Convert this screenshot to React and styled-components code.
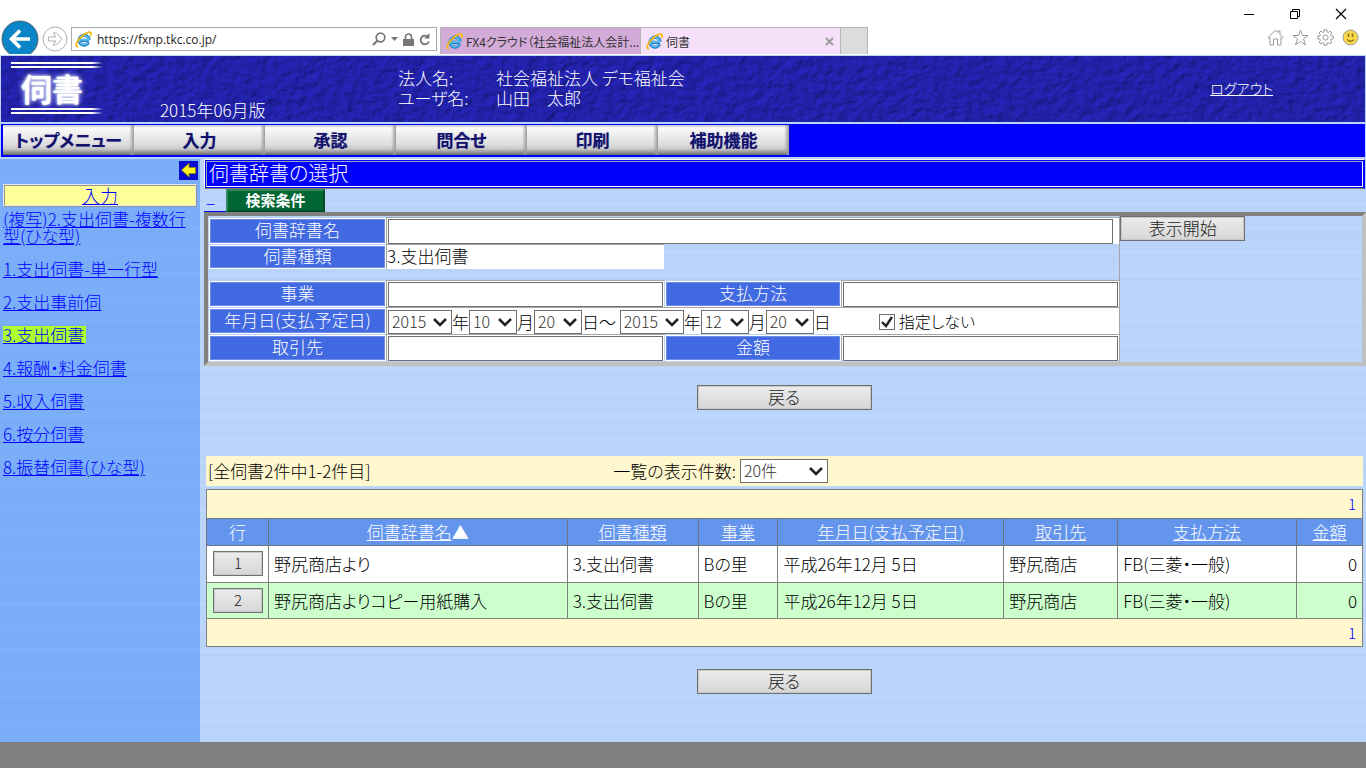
import React, { useState } from 'react';
import styled, { createGlobalStyle, css } from 'styled-components';

const GlobalStyle = createGlobalStyle`
  * {
    box-sizing: border-box;
  }

  body {
    margin: 0;
    font-family: 'Noto Sans CJK JP', sans-serif;
    font-size: 17px;
    font-weight: 300;
    line-height: 17px;
    font-feature-settings: 'palt';
    color: #000;
  }

  button, input, select {
    font: inherit;
    font-feature-settings: inherit;
    color: inherit;
    margin: 0;
  }
`;

const streaks = (a, b, c) => css`
  background: repeating-linear-gradient(
    ${a} 0 9px, ${b} 9px 11px, ${a} 11px 20px, ${c} 20px 24px, ${b} 24px 31px, ${a} 31px 44px, ${c} 44px 47px
  );
`;

const Page = styled.div`
  min-height: 100vh;
  display: flex;
  flex-direction: column;
  background: #bad4f9;
`;

/* browser chrome */

const Chrome = styled.header`
  height: 55px;
  background: #fff;
  overflow: hidden;
  border-bottom: 1px solid #fff;
  margin-bottom: 1px;
`;

const WindowControls = styled.div`
  height: 27px;
  display: flex;
  justify-content: flex-end;
  align-items: center;
  gap: 28px;
  padding-right: 16px;
`;

const IconButton = styled.button`
  display: flex;
  padding: 0;
  border: 0;
  background: none;
`;

const ToolBar = styled.div`
  height: 27px;
  display: flex;
  align-items: flex-start;
`;

const BackButton = styled(IconButton)`
  margin: -7px 3px 0 1px;
`;

const ForwardButton = styled(IconButton)`
  margin: -1px 3px 0 0;
`;

const AddressBar = styled.div`
  width: 366px;
  height: 24px;
  display: flex;
  align-items: center;
  gap: 5px;
  padding: 0 5px 0 3px;
  border: 1px solid #a9a9a9;
`;

const AddressInput = styled.input`
  flex: 1;
  min-width: 0;
  border: 0;
  padding: 0;
  outline: 0;
  font-family: 'Open Sans', sans-serif;
  font-size: 12px;
  font-weight: 400;
  color: #222;
`;

const Tabs = styled.div`
  display: flex;
  height: 27px;
  margin-left: 3px;
  border: 1px solid #b4b4b4;
  border-bottom: 0;
`;

const Tab = styled.div`
  width: 200px;
  display: flex;
  align-items: center;
  gap: 3px;
  padding: 0 ${(p) => (p.$active ? 6 : 0)}px 0 5px;
  background: ${(p) => (p.$active ? '#f6dff9' : '#d3abd9')};
  border-right: 1px solid #b4b4b4;
  font-size: 12px;
  font-weight: 400;
  color: #333;
  white-space: nowrap;
`;

const TabTitle = styled.span`
  flex: 1;
`;

const NewTab = styled.button`
  width: 26px;
  border: 0;
  background: #dcdcdc;
`;

const ToolIcons = styled.div`
  margin-left: auto;
  display: flex;
  align-items: center;
  gap: 8px;
  padding: 2px 7px 0 0;
`;

/* application banner */

const Banner = styled.div`
  position: relative;
  height: 66px;
  margin: 0 1px 2px;
  display: grid;
  grid-template-columns: 158px 238px 1fr auto;
  background: #1e1ea6;
  color: #fff;
`;

const Texture = styled.svg`
  position: absolute;
  inset: 0;
  width: 100%;
  height: 100%;
  opacity: 0.5;
`;

const Logo = styled.div`
  position: relative;
  padding: 6px 0 8px 10px;
  display: flex;
  flex-direction: column;
  justify-content: space-between;
`;

const LogoRule = styled.div`
  width: 92px;
  height: 6px;
  background:
    linear-gradient(90deg, #fff 88%, transparent) 0 0 / 100% 2px no-repeat,
    linear-gradient(90deg, #fff 88%, transparent) 0 4px / 100% 2px no-repeat;
`;

const LogoText = styled.div`
  padding-left: 10px;
  font-size: 31px;
  line-height: 34px;
  font-weight: 700;
  text-shadow: 0 0 3px #fff, 0 0 6px #c4ccff;
`;

const Version = styled.div`
  position: relative;
  align-self: end;
  padding: 0 0 4px 1px;
`;

const UserInfo = styled.dl`
  position: relative;
  margin: 0;
  padding: 13px 0 0 1px;
  display: grid;
  grid-template-columns: 98px 1fr;
  align-content: start;
  row-gap: 2px;
  white-space: pre;

  dt, dd {
    margin: 0;
    line-height: 18px;
  }
`;

const Logout = styled.a`
  position: relative;
  align-self: center;
  margin-right: 92px;
  padding-bottom: 2px;
  color: #fff;
  font-size: 14px;
`;

const NavBar = styled.nav`
  height: 33px;
  margin: 0 1px 2px;
  padding: 1px 2px 2px;
  display: flex;
  background: #00f;
`;

const NavButton = styled.button`
  width: 131px;
  padding: 0 0 2px;
  border: 0;
  background:
    linear-gradient(90deg, transparent, #9a9a9a) right / 5px 100% no-repeat,
    linear-gradient(#c4c4c4 0, #fafafa 3px, #efefef 9px, #dcdcdc 20px, #c8c8c8 24px, #8a8a8a 28px, #6a6a6a);
  color: #12126c;
  font-weight: 700;
  text-shadow: 0 0 1px #7777b0;
`;

/* body */

const Body = styled.div`
  flex: 1;
  display: flex;
`;

const SideBar = styled.aside`
  width: 200px;
  flex: none;
  padding: 2px 3px 0;
  ${streaks('#7aaef9', '#78acf7', '#7db0fa')}
`;

const CollapseButton = styled(IconButton)`
  margin: 0 -1px 4px auto;
`;

const SideTitle = styled.div`
  height: 23px;
  border: 2px ridge #e8e8e8;
  background: #ffff99;
  text-align: center;
  font-size: 18px;
  line-height: 18px;

  a {
    color: #00f;
  }
`;

const SideList = styled.ul`
  list-style: none;
  margin: 3px 0 0;
  padding: 0;
`;

const SideItem = styled.li`
  margin-bottom: 16px;
  line-height: 17px;

  a {
    color: #00f;
  }
`;

const CurrentLink = styled.a`
  display: inline-block;
  padding-right: 2px;
  background: #adff2f;
`;

const Main = styled.main`
  flex: 1;
  min-width: 0;
  padding: 0 0 20px 4px;
  ${streaks('#bad4f9', '#b8d3f8', '#bdd7fc')}
`;

const TitleFrame = styled.div`
  margin-right: 1px;
  padding: 1px;
  border: 1px solid #fff;
  border-right-color: #00f;
  border-bottom-color: #808080;
  background: #00f;
`;

const Title = styled.h1`
  margin: 0;
  height: 26px;
  padding-left: 2px;
  border: 1px solid #a0a0b8;
  border-right-color: #fff;
  border-bottom-color: #fff;
  color: #fff;
  font-size: 20px;
  line-height: 22px;
  font-weight: 300;
`;

const SearchHead = styled.div`
  height: 23px;
  display: flex;
  align-items: stretch;
`;

const ToggleLink = styled.a`
  width: 22px;
  padding: 6px 0 0 2px;
  color: #00f;
  text-decoration: none;
  border-bottom: 1px solid #00f;
`;

const SearchTab = styled.h2`
  width: 99px;
  margin: 0;
  border: 2px solid #004d26;
  border-top-color: #2f8a5c;
  border-left-color: #2f8a5c;
  background: #006633;
  color: #fff;
  font-size: 15px;
  line-height: 18px;
  font-weight: 700;
  text-align: center;
`;

const SearchPanel = styled.form`
  display: flex;
  border: 4px solid #808080;
  border-right-color: #c0c0c0;
  border-bottom-color: #c0c0c0;
`;

const Fields = styled.div`
  flex: 912;
  padding: 1px 0;
  border-right: 1px solid #a6a6a6;
`;

const FieldRow = styled.div`
  display: grid;
  grid-template-columns: 178fr 278fr 177fr 278fr;
  height: ${(p) => p.$height || 27}px;
  margin-bottom: ${(p) => p.$gap || 0}px;
`;

const FieldLabel = styled.label`
  margin: 2px 1px 1px 2px;
  border: 1px solid #6f8ce6;
  background: #4169e1;
  box-shadow: 0 0 0 1px #fff;
  color: #fff;
  text-align: center;
  line-height: ${(p) => (p.$short ? 18 : 20)}px;
`;

const Field = styled.div`
  grid-column: span ${(p) => p.$span || 1};
  display: flex;
  align-items: center;
  padding: 1px 1px 0;
  border-top: 1px solid #a6a6a6;
  border-left: 1px solid #a6a6a6;
  background: #fff;
`;

const PlainField = styled(Field)`
  padding: 0 0 3px;
`;

const TextInput = styled.input`
  width: ${(p) => (p.$inset ? 'calc(100% - 5px)' : '100%')};
  height: 25px;
  padding: 0 4px;
  border: 1px solid #707070;
  border-radius: 0;
  background: #fff;
`;

const chevron =
  "url(\"data:image/svg+xml,%3Csvg xmlns='http://www.w3.org/2000/svg' width='14' height='10'%3E%3Cpath d='M1 2l6 6 6-6' fill='none' stroke='%23222' stroke-width='2.6'/%3E%3C/svg%3E\")";

const Select = styled.select`
  width: ${(p) => p.$width}px;
  height: 24px;
  flex: none;
  padding: 0 0 1px 3px;
  appearance: none;
  border: 1px solid #707070;
  border-radius: 0;
  background: #fff ${chevron} right 4px center no-repeat;
  color: #333;
  font-size: 16px;
`;

const CheckLabel = styled.label`
  margin-left: 48px;
  display: flex;
  align-items: center;
  gap: 4px;
  font-size: 16px;
`;

const tick =
  "url(\"data:image/svg+xml,%3Csvg xmlns='http://www.w3.org/2000/svg' width='14' height='14'%3E%3Cpath d='M2 7l4 4 6-9' fill='none' stroke='%23222' stroke-width='2.4'/%3E%3C/svg%3E\")";

const CheckBox = styled.input`
  width: 16px;
  height: 16px;
  appearance: none;
  border: 1px solid #707070;
  background: #fff;

  &:checked {
    background-image: ${tick};
  }
`;

const PanelSide = styled.div`
  flex: 242;
`;

const Button = styled.button`
  display: block;
  width: ${(p) => p.$width}px;
  height: 25px;
  padding: 0 0 2px;
  border: 1px solid #707070;
  box-shadow: inset 0 0 0 1px #c8c8c8;
  background: linear-gradient(#ececec, #d6d6d6);
  color: #222;
`;

const RowButton = styled(Button)`
  margin-left: 1px;
  font-size: 15px;
`;

const BackRow = styled.div`
  display: flex;
  justify-content: center;
  margin-right: 2px;
  padding: ${(p) => (p.$last ? '22px 0 0' : '19px 0 46px')};
`;

const ListHead = styled.div`
  display: grid;
  grid-template-columns: 406fr 751fr;
  align-items: center;
  height: 30px;
  margin: 0 3px 3px 2px;
  padding: 0 0 1px 2px;
  background: #fff7ce;
`;

const PageSize = styled.label`
  display: flex;
  align-items: center;
  gap: 4px;
`;

const Table = styled.table`
  width: calc(100% - 5px);
  margin-left: 2px;
  table-layout: fixed;
  border-collapse: collapse;
  border: 1px solid #808080;
`;

const PagerCell = styled.td`
  height: ${(p) => p.$height}px;
  padding: 0 6px 1px;
  background: #fff7ce;
  color: #00f;
  text-align: right;
  font-size: 15px;
`;

const HeadCell = styled.th`
  height: 27px;
  padding: 0 0 2px;
  border: 1px solid #6f7680;
  background: #6495ed;
  color: #fff;
  font-weight: 300;

  a {
    color: #fff;
  }
`;

const Row = styled.tr`
  height: ${(p) => (p.$alt ? 36 : 37)}px;
  background: ${(p) => (p.$alt ? '#ccffcc' : '#fff')};
`;

const Cell = styled.td`
  padding: 0 5px 1px;
  border: 1px solid #808080;
  text-align: ${(p) => p.$align || 'left'};
  white-space: pre;
`;

const Footer = styled.footer`
  height: 26px;
  background: #808080;
`;

const IeIcon = () => (
  <svg width="17" height="17" viewBox="0 0 17 17" fill="none">
    <path d="M14 9.3H5.2M13.6 11.4a5 5 0 1 1 .5-2.6" stroke="#1d7fc4" strokeWidth="3.2" />
    <path d="M13.8 8.9H5.6M13 11.6a4.7 4.7 0 1 1 .8-2.4" stroke="#5cc0ee" strokeWidth="1.6" />
    <path d="M3 15.6C.2 16 .6 12 4.6 7.6 8.6 3 14 .2 15.6 1.5c.9.8.6 2-.1 3.3" stroke="#f2b90c" strokeWidth="1.7" />
  </svg>
);

const menuItems = ['トップメニュー', '入力', '承認', '問合せ', '印刷', '補助機能'];

const currentLink = '3.支出伺書';

const sideLinks = [
  '(複写)2.支出伺書-複数行型(ひな型)',
  '1.支出伺書-単一行型',
  '2.支出事前伺',
  '3.支出伺書',
  '4.報酬・料金伺書',
  '5.収入伺書',
  '6.按分伺書',
  '8.振替伺書(ひな型)',
];

const columns = [
  { label: '行', width: 62, plain: true },
  { label: '伺書辞書名', width: 299, sorted: true },
  { label: '伺書種類', width: 131 },
  { label: '事業', width: 80 },
  { label: '年月日(支払予定日)', width: 226 },
  { label: '取引先', width: 114 },
  { label: '支払方法', width: 179 },
  { label: '金額', width: 66 },
];

const totalWidth = columns.reduce((sum, c) => sum + c.width, 0);

const rows = [
  ['野尻商店より', '3.支出伺書', 'Bの里', '平成26年12月 5日', '野尻商店', 'FB(三菱・一般)'],
  ['野尻商店よりコピー用紙購入', '3.支出伺書', 'Bの里', '平成26年12月 5日', '野尻商店', 'FB(三菱・一般)'],
];

const BrowserChrome = () => (
  <Chrome>
    <WindowControls>
      <IconButton aria-label="最小化">
        <svg width="18" height="18"><path d="M4 9.5h10" stroke="#000" /></svg>
      </IconButton>
      <IconButton aria-label="元に戻す">
        <svg width="18" height="18" fill="none" stroke="#000">
          <path d="M4.5 6.5h7v7h-7zM6.5 6.5v-2h7v7h-2" />
        </svg>
      </IconButton>
      <IconButton aria-label="閉じる">
        <svg width="18" height="18"><path d="M4 4l10 10M14 4L4 14" stroke="#000" strokeWidth="1.2" /></svg>
      </IconButton>
    </WindowControls>
    <ToolBar>
      <BackButton aria-label="戻る">
        <svg width="38" height="38" fill="none">
          <circle cx="19" cy="19" r="18" fill="#0a86c8" stroke="#54646e" />
          <path d="M29 19H11M19 10.5L10.5 19l8.5 8.5" stroke="#fff" strokeWidth="3.6" />
        </svg>
      </BackButton>
      <ForwardButton aria-label="進む">
        <svg width="26" height="26" fill="none" stroke="#b0b0b0">
          <circle cx="13" cy="13" r="12" />
          <path d="M6.5 11h7.5l-3-4h3.5l5.5 6-5.500 6h-3.500l3-4H6.500z" />
        </svg>
      </ForwardButton>
      <AddressBar>
        <IeIcon />
        <AddressInput aria-label="アドレス" defaultValue="https://fxnp.tkc.co.jp/" />
        <svg width="14" height="14" fill="none" stroke="#777">
          <circle cx="8.5" cy="5.5" r="4.3" strokeWidth="1.7" />
          <path d="M5.5 8.5L1 13" strokeWidth="2.2" />
        </svg>
        <svg width="7" height="4"><path d="M0 0h7L3.5 4z" fill="#777" /></svg>
        <svg width="11" height="13" fill="none">
          <path d="M0 6h11v7H0z" fill="#777" />
          <path d="M2.5 6V4a3 3 0 0 1 6 0v2" stroke="#777" strokeWidth="1.7" />
        </svg>
        <svg width="12" height="13" fill="none">
          <path d="M8.5 3.5A4.3 4.3 0 1 0 10 8.5" stroke="#777" strokeWidth="1.9" />
          <path d="M10.5 0v5.5H5z" fill="#777" />
        </svg>
      </AddressBar>
      <Tabs>
        <Tab>
          <IeIcon />
          <TabTitle>FX4クラウド（社会福祉法人会計...</TabTitle>
        </Tab>
        <Tab $active>
          <IeIcon />
          <TabTitle>伺書</TabTitle>
          <IconButton aria-label="タブを閉じる">
            <svg width="9" height="9"><path d="M1 1l7 7M8 1L1 8" stroke="#999" strokeWidth="1.8" /></svg>
          </IconButton>
        </Tab>
        <NewTab aria-label="新しいタブ" />
      </Tabs>
      <ToolIcons>
        <IconButton aria-label="ホーム">
          <svg width="17" height="17" fill="none" stroke="#999">
            <path d="M1 8.5L8.5 1l2.5 2.5V2h2v3.5l3 3-1 1-1-1v7.5h-3.500v-6h-4v6H3V8.500l-1 1z" />
          </svg>
        </IconButton>
        <IconButton aria-label="お気に入り">
          <svg width="17" height="17" fill="none" stroke="#999">
            <path d="M8.5 1l2 5.500h5.500l-4.500 3.500 2 6-5-3.700-5 3.700 2-6L1 6.500h5.500z" />
          </svg>
        </IconButton>
        <IconButton aria-label="ツール">
          <svg width="17" height="17" viewBox="0 0 17 17" fill="none" stroke="#999">
            <path d="M7 .8h3v2l1.600.7L13 2l2 2-1.400 1.500.6 1.500h2v3h-2l-.6 1.500L15 13l-2 2-1.400-1.400-1.600.6v2H7v-2l-1.600-.6L4 15l-2-2 1.400-1.500L2.800 10h-2V7h2l.6-1.500L2 4l2-2 1.400 1.500L7 2.800z" />
            <circle cx="8.5" cy="8.5" r="2.6" />
          </svg>
        </IconButton>
        <IconButton aria-label="フィードバック">
          <svg width="17" height="17" fill="none">
            <circle cx="8.5" cy="8.5" r="7.5" fill="#fbd84b" stroke="#999" />
            <path d="M6.5 4.5v3.5M10.5 4.5v3.5" stroke="#8b701c" strokeWidth="1.6" />
            <path d="M5 10.5q3.5 3.5 7 0" stroke="#8b701c" strokeWidth="1.2" />
          </svg>
        </IconButton>
      </ToolIcons>
    </ToolBar>
  </Chrome>
);

const DateSelect = ({ name, year, month, day }) => (
  <>
    <Select $width={64} aria-label={`${name}の年`}><option>{year}</option></Select>年
    <Select $width={48} aria-label={`${name}の月`}><option>{month}</option></Select>月
    <Select $width={48} aria-label={`${name}の日`}><option>{day}</option></Select>日
  </>
);

const SearchForm = () => {
  const [unspecified, setUnspecified] = useState(true);

  return (
    <SearchPanel onSubmit={(e) => e.preventDefault()}>
      <Fields>
        <FieldRow>
          <FieldLabel htmlFor="dictName">伺書辞書名</FieldLabel>
          <Field $span={3}><TextInput id="dictName" $inset /></Field>
        </FieldRow>
        <FieldRow $height={25} $gap={11}>
          <FieldLabel as="div" $short>伺書種類</FieldLabel>
          <PlainField>3.支出伺書</PlainField>
        </FieldRow>
        <FieldRow>
          <FieldLabel htmlFor="business">事業</FieldLabel>
          <Field><TextInput id="business" /></Field>
          <FieldLabel htmlFor="payment">支払方法</FieldLabel>
          <Field><TextInput id="payment" /></Field>
        </FieldRow>
        <FieldRow>
          <FieldLabel as="div">年月日(支払予定日)</FieldLabel>
          <Field $span={3}>
            <DateSelect name="開始" year="2015" month="10" day="20" />
            <span>～&nbsp;</span>
            <DateSelect name="終了" year="2015" month="12" day="20" />
            <CheckLabel>
              <CheckBox
                type="checkbox"
                checked={unspecified}
                onChange={(e) => setUnspecified(e.target.checked)}
              />
              指定しない
            </CheckLabel>
          </Field>
        </FieldRow>
        <FieldRow>
          <FieldLabel htmlFor="partner">取引先</FieldLabel>
          <Field><TextInput id="partner" /></Field>
          <FieldLabel htmlFor="amount">金額</FieldLabel>
          <Field><TextInput id="amount" /></Field>
        </FieldRow>
      </Fields>
      <PanelSide>
        <Button type="submit" $width={125}>表示開始</Button>
      </PanelSide>
    </SearchPanel>
  );
};

const ResultTable = () => (
  <Table>
    <colgroup>
      {columns.map((c) => (
        <col key={c.label} style={{ width: `${(c.width / totalWidth) * 100}%` }} />
      ))}
    </colgroup>
    <thead>
      <tr>
        <PagerCell colSpan={columns.length} $height={29}>1</PagerCell>
      </tr>
      <tr>
        {columns.map((c) => (
          <HeadCell key={c.label}>
            {c.plain ? c.label : <a href="#sort">{c.label}</a>}
            {c.sorted && '▲'}
          </HeadCell>
        ))}
      </tr>
    </thead>
    <tbody>
      {rows.map((row, i) => (
        <Row key={row[0]} $alt={i % 2 === 1}>
          <Cell><RowButton $width={50}>{i + 1}</RowButton></Cell>
          {row.map((text, j) => (
            <Cell key={j}>{text}</Cell>
          ))}
          <Cell $align="right">0</Cell>
        </Row>
      ))}
    </tbody>
    <tfoot>
      <tr>
        <PagerCell colSpan={columns.length} $height={28}>1</PagerCell>
      </tr>
    </tfoot>
  </Table>
);

const App = () => (
  <Page>
    <GlobalStyle />
    <BrowserChrome />
    <Banner>
      <Texture aria-hidden="true">
        <filter id="leather" x="0" y="0" width="100%" height="100%" colorInterpolationFilters="sRGB">
          <feTurbulence type="fractalNoise" baseFrequency="0.1 0.13" numOctaves="3" seed="4" />
          <feDiffuseLighting lightingColor="#2828b8" surfaceScale="2" diffuseConstant="1.2">
            <feDistantLight azimuth="225" elevation="52" />
          </feDiffuseLighting>
        </filter>
        <rect width="100%" height="100%" filter="url(#leather)" />
      </Texture>
      <Logo>
        <LogoRule />
        <LogoText>伺書</LogoText>
        <LogoRule />
      </Logo>
      <Version>2015年06月版</Version>
      <UserInfo>
        <dt>法人名:</dt>
        <dd>社会福祉法人 デモ福祉会</dd>
        <dt>ユーザ名:</dt>
        <dd>山田　太郎</dd>
      </UserInfo>
      <Logout href="#logout">ログアウト</Logout>
    </Banner>
    <NavBar>
      {menuItems.map((item) => (
        <NavButton key={item}>{item}</NavButton>
      ))}
    </NavBar>
    <Body>
      <SideBar>
        <CollapseButton aria-label="メニューを閉じる">
          <svg width="19" height="19">
            <path d="M0 0h19v19H0z" fill="#0a0ad0" />
            <path d="M2.5 9L10 2.5v4h6.5v6H10v3.5z" fill="#ffee22" stroke="#8a8a10" />
          </svg>
        </CollapseButton>
        <SideTitle><a href="#input">入力</a></SideTitle>
        <SideList>
          {sideLinks.map((link) => (
            <SideItem key={link}>
              {link === currentLink ? (
                <CurrentLink href="#form">{link}</CurrentLink>
              ) : (
                <a href="#form">{link}</a>
              )}
            </SideItem>
          ))}
        </SideList>
      </SideBar>
      <Main>
        <TitleFrame>
          <Title>伺書辞書の選択</Title>
        </TitleFrame>
        <SearchHead>
          <ToggleLink href="#toggle">−</ToggleLink>
          <SearchTab>検索条件</SearchTab>
        </SearchHead>
        <SearchForm />
        <BackRow><Button $width={175}>戻る</Button></BackRow>
        <ListHead>
          <span>[全伺書2件中1-2件目]</span>
          <PageSize>
            一覧の表示件数:
            <Select $width={88}><option>20件</option></Select>
          </PageSize>
        </ListHead>
        <ResultTable />
        <BackRow $last><Button $width={175}>戻る</Button></BackRow>
      </Main>
    </Body>
    <Footer />
  </Page>
);

export default App;
